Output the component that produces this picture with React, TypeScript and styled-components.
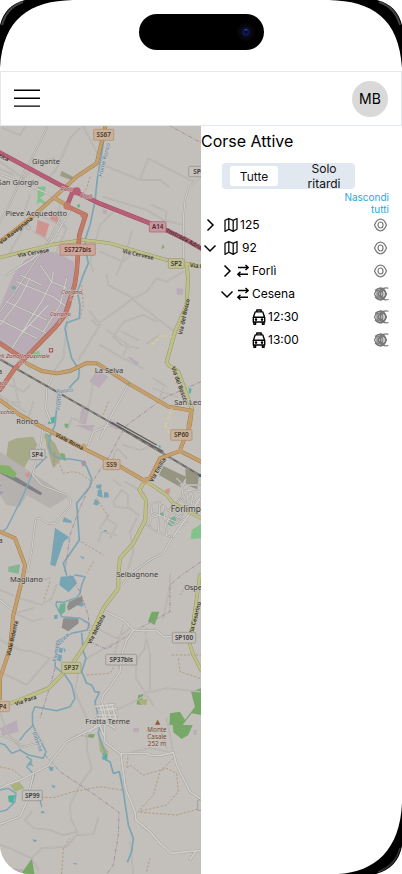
import React from "react";
import styled, { createGlobalStyle } from "styled-components";

const GlobalStyle = createGlobalStyle`
  body { margin: 0; background: #fff; overflow: hidden; }
  *, *::before, *::after { box-sizing: border-box; }
`;

const Screen = styled.div`
  position: relative;
  width: 402px;
  height: 874px;
  overflow: hidden;
  display: flex;
  flex-direction: column;
  background: #fff;
  color: #000;
  font-family: Inter, "Liberation Sans", sans-serif;
`;

const StatusBar = styled.div`
  height: 71px;
  flex: none;
  display: flex;
  justify-content: center;
  padding-top: 14px;
`;

const Island = styled.div`
  width: 125px;
  height: 36px;
  border-radius: 18px;
  background: #000;
  display: flex;
  align-items: center;
  justify-content: flex-end;
  padding-right: 8px;
`;

const Header = styled.header`
  height: 55px;
  flex: none;
  display: flex;
  align-items: center;
  justify-content: space-between;
  padding: 0 13px;
  border: 1px solid #e2e8f0;
`;

const Avatar = styled.div`
  width: 36px;
  height: 36px;
  border-radius: 50%;
  display: grid;
  place-items: center;
  background: #d9d9d9;
  font-size: 14px;
`;

const Main = styled.main`
  flex: 1;
  display: flex;
  min-height: 0;
`;

const MapPane = styled.section`
  width: 201px;
  height: 748px;
  flex: none;
  overflow: hidden;
  border-bottom-left-radius: 30px;
  background: #c3bfba;
  svg { display: block; }
`;

const Panel = styled.section`
  flex: 1;
  display: flex;
  flex-direction: column;
  padding-right: 13px;
`;

const Title = styled.h1`
  margin: 5px 0 0;
  font-size: 16px;
  line-height: 20px;
  font-weight: 400;
`;

const Toggle = styled.div`
  width: 133px;
  height: 26px;
  margin: 12px 0 0 21px;
  padding: 0 8px;
  border-radius: 4px;
  background: #e2e8f0;
  display: flex;
  align-items: center;
  justify-content: space-between;
`;

const Option = styled.button<{ $active?: boolean }>`
  border: 0;
  padding: 0;
  width: ${p => (p.$active ? 48 : 46)}px;
  height: ${p => (p.$active ? 20 : 30)}px;
  border-radius: 3px;
  background: ${p => (p.$active ? "#fff" : "transparent")};
  color: #111;
  font: 12px/15px Inter, sans-serif;
`;

const HideAll = styled.a`
  align-self: flex-end;
  width: 50px;
  margin-top: 2px;
  text-align: right;
  font-size: 10px;
  line-height: 12px;
  color: #27a9e1;
`;

const Tree = styled.ul`
  list-style: none;
  margin: -2px 0 0;
  padding: 0;
`;

const Row = styled.li<{ $indent: number }>`
  height: 23px;
  display: flex;
  align-items: center;
  padding-left: ${p => p.$indent}px;
  font-size: 12px;
  line-height: 15px;
  > svg { flex: none; }
`;

const Label = styled.span<{ $gap?: number }>`
  flex: 1;
  margin-left: ${p => p.$gap ?? 0}px;
`;

const Frame = styled.svg`
  position: absolute;
  inset: 0;
  pointer-events: none;
`;

const MapText = styled.text<{ $size?: number; $tone?: string; $bold?: boolean; $italic?: boolean }>`
  font-family: "Noto Sans", sans-serif;
  font-size: ${p => p.$size ?? 22}px;
  font-weight: ${p => (p.$bold ? 600 : 400)};
  font-style: ${p => (p.$italic ? "italic" : "normal")};
  fill: ${p => p.$tone ?? "#383838"};
  text-anchor: middle;
  paint-order: stroke;
  stroke: #cbc7c2;
  stroke-width: ${p => (p.$bold ? 0 : 3)}px;
`;

type Line = [d: string, width?: number];

const Lines = ({ items, color, casing, width, dash }: { items: Line[]; color: string; casing?: string; width: number; dash?: string }) => (
  <g fill="none" strokeLinejoin="round" strokeLinecap={dash ? "butt" : "round"}>
    {casing && items.map(([d, w = width]) => <path key={"c" + d} d={d} stroke={casing} strokeWidth={w + 2.5} />)}
    {items.map(([d, w = width]) => <path key={d} d={d} stroke={color} strokeWidth={w} strokeDasharray={dash} />)}
  </g>
);

const areas: [string, string][] = [
  ["#b9acb7", "M75 405 120 383 165 380 222 410V445L215 545 180 600 95 680 60 700 0 655V545L40 450Z"],
  ["#b9acb7", "M290 735 325 755 297 788 268 770ZM245 850 268 848 258 898 237 895ZM383 697 390 695 417 713 413 725ZM530 488 550 492 548 510 530 508ZM325 880 370 905 350 915 320 900ZM308 252 322 256 320 268 308 266ZM225 900H285L275 920ZM0 2225 70 2234 60 2247H0Z"],
  ["#b9acb7", "M0 1810 50 1785 56 1820 8 1832ZM15 2230 72 2233 52 2250 10 2250ZM400 1809H417V1822H400ZM580 1815H590V1830H580Z"],
  ["#84c28d", "M112 186 137 184 133 210 120 218 137 232 134 240 120 230 110 240 113 214ZM100 682 118 678 122 692 102 704ZM590 1205 603 1196V1240L572 1243 575 1215Z"],
  ["#7bad76", "M160 982 175 987 173 1005 158 1002ZM180 984 194 986 198 1009 182 1002ZM485 365l6-7 2 10-8 5ZM192 896h14v12h-10Z"],
  ["#6fb291", "M135 925 150 930 148 944 133 940ZM510 1180l13-6 7 10-15 20-12-6ZM478 1164l14-2v14h-11ZM180 1437 197 1434 196 1459 183 1470 176 1457ZM230 240l8-4 3 9-7 4ZM35 484h12v9H36Z"],
  ["#a7aa88", "M50 940 100 935 112 960 80 1015 62 1050 18 1000 25 950ZM135 925 165 955 185 1000 160 1030 140 965Z"],
  ["#9a9d7f", "M185 138 228 160 215 166 180 152Z"],
  ["#969581", "M490 1023 558 1055 542 1087 477 1050ZM556 1030 597 1050 592 1093 558 1080Z"],
  ["#b4b1ae", "M0 980 205 1115 150 1150 80 1110 60 1145 20 1140 0 1110Z"],
  ["#828087", "M0 1027 127 1104 121 1111 0 1045Z"],
  ["#83b167", "M0 1020 28 1022 50 1045 43 1060 0 1043Z"],
  ["#cf9490", "M113 285 148 297 135 338 107 323ZM154 265 181 280 169 293 150 281ZM75 1046l12-6 5 14-11 5ZM497 1093l14-3-3 16-13-3Z"],
  ["#c98795", "M243 1013 254 1004 260 1017 248 1025Z"],
  ["#77a5b3", "M165 1208 208 1237 191 1250 166 1324 151 1320ZM288 1080 305 1078 303 1092 290 1090ZM293 1095 305 1093 308 1118 292 1113ZM313 1100 325 1103 327 1117 311 1118ZM285 1122 298 1130 293 1142 280 1138ZM192 1176 215 1188 214 1195 188 1190ZM310 1216 321 1215 318 1225ZM238 1293 252 1296 250 1303ZM474 959 483 962 480 973ZM182 1355 220 1352 231 1375 206 1402 178 1380ZM177 1566 190 1572 186 1585 173 1580ZM190 1567 197 1574 194 1584ZM172 1587 186 1590 183 1610 171 1605ZM234 1432 252 1435 248 1446 235 1442ZM163 1470 174 1469 172 1482 162 1482ZM145 1925 160 1926 159 1938 150 1937ZM153 1980 168 1983 160 1990ZM97 2143 112 2146 103 2152ZM198 2125 208 2124 205 2130ZM219 2215 230 2214 228 2220ZM123 2059h10v6h-10Z"],
  ["#908e8c", "M207 1430 245 1413 250 1430 205 1457 201 1446ZM190 1480 235 1480 236 1495 205 1519 185 1508Z"],
  ["#77a868", "M455 1460 478 1460 464 1500 444 1489ZM518 1800 578 1800 565 1830 545 1842 520 1822ZM415 1710 430 1707 424 1740 410 1738ZM573 1700 603 1690V1770L575 1765 548 1800 508 1800 510 1765 540 1760 555 1785 585 1745ZM96 2200 103 2247 63 2247ZM265 1827 285 1828 280 1839 265 1837Z"],
  ["#a9b27c", "M415 1725 442 1722 440 1740 420 1738ZM293 1820 310 1860 325 1880 322 1905 300 1880ZM30 1980 58 1970 73 1990 45 2000Z"],
  ["#4eb39a", "M567 788l8 4-4 15-5-4ZM308 1885 322 1888 320 1907 308 1903ZM24 2012 45 2010 40 2035 26 2030ZM150 880l15-6-2 20-20 4Z"],
  ["#87b594", "M25 1325 60 1318 56 1346 25 1340Z"],
];

const tracks: Line[] = [
  ["M240 10 210 40 170 130 150 155M250 5 310 120 420 165 445 100 580 170M420 165H480L505 185M310 215 440 255 490 285 550 300M350 250 300 300 270 410 280 440M395 318 385 360 350 450M455 240 500 260 495 300M300 380 370 410 390 390M320 450 325 480 400 520 440 500 470 460 500 470 550 440"],
  ["M400 525 530 625M400 520 290 600 275 585M370 590 430 570 470 590M370 593 340 635 365 660 415 670M320 615 385 660 370 690M365 620 415 645M440 655 480 630M300 660 370 700 430 730M270 560 300 600 235 705M180 600 205 560 190 700 160 740M460 790 530 815M460 760 500 785M480 820 490 790M0 640 40 670 90 730M0 810 75 860M40 760 60 850M280 765 270 830 245 890 215 880 205 910"],
  ["M350 970 380 1000M370 960 420 975 450 965M350 970 335 1010M340 1130 365 1095 385 1110V1150L345 1145 340 1130M385 1145 415 1170M375 1070 435 1105M340 1065 360 1080M320 1180 350 1200 330 1240M350 1230 305 1220 295 1250M300 1210 325 1170M410 1180 390 1220 400 1280 385 1330"],
  ["M0 1395 60 1420 125 1440 155 1420 170 1380M70 1350 90 1370 150 1360M45 1465 100 1450M0 1545 60 1575 100 1580 150 1600 80 1680 0 1640M45 1465 100 1490 125 1480M260 1600 340 1555M250 1490 350 1540 390 1510M370 1500 345 1580 360 1640M510 1350V1380L490 1480M440 1510 435 1570 400 1620M435 1520 450 1590V1690L440 1710M390 1590 410 1610 408 1660 440 1710M440 1705 500 1690 600 1700M440 1710 460 1740M330 1765 400 1730 440 1710"],
  ["M260 1820 262 1880 275 1930 240 1980 210 2040 212 2080 232 2120 190 2130 150 2115 100 2110 75 2085 95 2060M232 2130 280 2128 295 2080M0 2160 30 2170 95 2200 125 2170 200 2165 230 2130M95 2200 115 2235M390 2150 400 2247M395 1880 450 1870 510 1880M500 1780 512 1840 520 1885M485 1820 500 1870M0 1760 20 1820 60 1870M235 1640 225 1700 260 1780"],
  ["M10 10 60 30 75 5M0 110 70 160 90 140M70 165 100 120 160 100M0 130 40 150M90 210 70 270 85 300M120 270 200 310 160 400M180 230 175 280 200 310M70 310 30 380M100 320 160 355M0 700 50 730 25 760M30 780 70 800 90 780M100 830 85 880M20 830 60 830"],
];

const minor: Line[] = [
  ["M140 10 95 100 75 135 30 235 0 290", 3], ["M0 148 60 170 130 200 165 215", 4], ["M210 255 160 345 100 400 20 450", 4], ["M600 155 565 190 555 225 550 280V410", 3.5], ["M190 260 150 340 45 500 0 560", 3],
  ["M50 470 160 515 200 545M90 460 60 520 0 600M120 420 155 470 130 520 30 680M200 460 180 540 130 620M60 630 145 540M0 585 90 630 110 640M20 530 140 585M60 450 125 480M160 440 155 470 200 490M90 600 150 630", 3.5],
  ["M385 780 345 850 300 940", 4], ["M165 740 140 790 137 850 152 890", 4], ["M130 900 122 960 110 1000 98 1050 125 1080 200 1110 212 1125 210 1145 165 1195 145 1197 120 1180 108 1182 103 1210 95 1280 83 1340", 3.5], ["M330 900 280 920 265 960", 4],
  ["M515 1240 490 1285 450 1305 395 1345 370 1375", 4], ["M600 1120 570 1165 540 1205 520 1235", 5], ["M318 1460 370 1485 400 1515 380 1545 368 1580 360 1640 330 1685 310 1710 305 1730 315 1765 320 1795", 4.5], ["M400 1515 430 1517 470 1517 490 1535 570 1535", 4.5],
  ["M0 1426 45 1460", 4], ["M300 1802 270 1815 200 1850 160 1900 145 1922 60 1965 20 1980 0 1990", 4.5], ["M0 2098 60 2075 80 2030 90 1990 100 1950", 4.5], ["M315 1800 313 1850 360 1886 440 1885 450 1890 480 1892 520 1883 530 1920 550 1960 570 2000 603 2022", 5], ["M363 1888 375 1980 380 2000 405 2060 408 2085 450 2120 480 2155 515 2185 560 2180 603 2177M590 2175 570 2205", 5],
  ["M0 1830 50 1850 70 1865 130 1850", 3],
  ["M445 1140 470 1130 510 1160 540 1120M450 1180 480 1170 520 1200 545 1180M440 1200 470 1220 510 1235M510 1150 535 1180 570 1140M530 1060 550 1080 545 1120 560 1140M455 1150 450 1200M480 1130 475 1220M555 1110 603 1140M565 1090 560 1150M580 1100 570 1160M550 1095 603 1100M490 1140 500 1230M450 1160 550 1200M520 1130 500 1200M540 1080 600 1080M530 1170 560 1190", 3],
  ["M285 1745 342 1738M295 1755 350 1750M293 1770 352 1770M300 1740 315 1790M320 1740 335 1790M335 1738 350 1790M290 1780H350M270 1820 290 1800 320 1795 345 1810M300 1800 310 1830", 5],
];

const rivers: Line[] = [
  ["M318 0 305 85 292 160 285 230 270 300 255 345 262 400 265 415 250 450 232 500 240 540 238 580 200 593 195 610 203 650 215 700 238 735 235 760 215 780 200 800 175 800 165 900 150 935 147 965 155 985 175 1000 210 1002 245 1008 260 1025 275 1062 270 1085 230 1135 238 1245 190 1315 200 1350", 5],
  ["M225 1350 255 1355 245 1380 240 1405 230 1418 190 1432 170 1430 168 1440 185 1475 240 1480 268 1495 262 1515 215 1525 170 1550 165 1625 195 1650 215 1680 225 1720 210 1745 170 1757 105 1745 97 1765 98 1800 138 1880 130 1900 85 1890 60 1875 35 1885 15 1860 0 1855", 4.5],
  ["M245 1525 250 1580 258 1600 245 1640 260 1675 275 1680 285 1700 298 1702 285 1730 300 1800 295 1825 305 1855 315 1885 308 1900 330 1910 340 1945 358 1940 370 2000 385 2100 400 2140 395 2180 383 2210", 5],
  ["M140 995 105 1030 95 1050 70 1110 20 1210 0 1225", 4], ["M100 1800 75 1825 60 1845M80 1895 95 1905 80 1925 103 1950 90 1995M0 1995 25 1990 48 2005 45 2030 20 2055 0 2060M120 2025 125 2045", 4],
  ["M88 1920 95 1912M88 1914 98 1922", 4],
];

const tan: Line[] = [
  ["M317 0 303 60 290 115 230 155 165 215 85 285 0 350", 9], ["M165 220 200 240", 9], ["M80 715 125 738 170 745 210 738 260 714 292 715 385 775 505 845 575 857 570 900 540 975", 9],
  ["M0 825 60 870 115 900 250 970 370 1030 430 1065 450 1060 480 1000 540 978 603 1010", 9], ["M565 905 573 860", 8], ["M0 1220 45 1240 75 1320 70 1350 40 1470 30 1570 0 1660V1720", 9],
];
const yellow: Line[] = [
  ["M0 398 30 390 160 358 250 345 330 355 500 405 550 415 575 418", 8], ["M560 420 564 460 560 540 525 620 500 710 505 720 535 740 577 855", 9], ["M430 1075 418 1095 438 1125 436 1185 400 1255 360 1300 355 1350V1390L310 1450 265 1545 215 1620 145 1690 60 1725 0 1745", 9], ["M600 1350 570 1560 580 1590 603 1635", 8], ["M440 1070 500 1110 520 1135 603 1180", 8], ["M550 415 603 425", 7],
];
const dashed: Line[] = [["M245 480 250 540 240 580M270 155 260 190 245 210M175 1010 190 1045 220 1040 240 1045 275 1070M165 980 160 1025M290 1120 325 1175M325 830 310 870M235 1245 310 1290M280 1310 260 1345M0 1925 40 1935 70 1960M100 2015 160 2018 220 2000 300 1985 365 1995M385 1885 380 1930 390 1920 430 1950 500 1930 530 1945 535 2000 500 2040 415 2060 460 2010 480 1940 520 1900M420 2062 530 2070 603 2050M515 1590H603M535 1600 540 1640 600 1660M150 1370 130 1430M260 1650 330 1645 350 1610M540 1410 560 1380M185 2247 190 2170 210 2140M440 2240 450 2200M200 1850 230 1830 270 1835"]];

const shields: [x: number, y: number, w: number, h: number, t: string, bg: string, edge: string, ink: string][] = [
  [281, 13, 60, 33, "SS67", "#c9b29b", "#b08a62", "#493522"], [448, 290, 50, 31, "A14", "#c29a9f", "#b0566b", "#5c2130"], [180, 357, 106, 34, "SS727bis", "#cba79b", "#bd7364", "#51261e"],
  [505, 401, 48, 29, "SP2", "#c0be98", "#9c9c5f", "#3d3d1e"], [512, 914, 64, 32, "SP60", "#c9b29b", "#b08a62", "#493522"], [310, 1003, 50, 31, "SS9", "#c9b29b", "#b08a62", "#493522"],
  [89, 973, 46, 31, "SP4", "#c4c1bd", "#8e8c89", "#3a3a3a"], [566, 124, 60, 31, "SP6", "#c4c1bd", "#8e8c89", "#3a3a3a"], [185, 1612, 58, 33, "SP37", "#c0be98", "#9c9c5f", "#3d3d1e"], [317, 1588, 93, 32, "SP37bis", "#c4c1bd", "#8e8c89", "#3a3a3a"],
  [517, 1522, 70, 32, "SP100", "#c4c1bd", "#8e8c89", "#3a3a3a"], [67, 1996, 60, 31, "SP99", "#c4c1bd", "#8e8c89", "#3a3a3a"], [-22, 1729, 50, 31, "SP4", "#c9b29b", "#b08a62", "#493522"], [593, 2025, 30, 31, "", "#c4c1bd", "#8e8c89", "#3a3a3a"],
];

const places: [x: number, y: number, t: string][] = [[138, 117, "Gigante"], [54, 179, "San Giorgio"], [109, 273, "Pieve Acquedotto"], [327, 744, "La Selva"], [571, 839, "San Leon…"], [82, 897, "Ronco"], [412, 1356, "Selbagnone"], [79, 1371, "Magliano"], [323, 1798, "Fratta Terme"]];

const roadNames: [x: number, y: number, a: number, t: string, c?: string][] = [
  [48, 317, -38, "Via Ravegnana"], [100, 384, -10, "Via Cervese"], [414, 389, 13, "Via Cervese"], [553, 575, -78, "Via del Bosco"], [537, 777, 70, "Via del Bosco"], [208, 950, 27, "Viale Roma"], [474, 1035, -60, "Via Emilia"],
  [38, 1540, -77, "Viale Bidente"], [290, 1513, -63, "Via Meldola"], [77, 1727, -19, "Via Para"], [586, 1480, -75, "Via Cesarino"], [557, 345, 28, "Autostrada Adriatica"], [7, 96, 25, "atica"], [590, 423, 5, "Via R"],
  [313, 105, -76, "Fiume Ronco", "#527e9e"], [177, 830, -85, "Fiume", "#527e9e"], [194, 798, -8, "Ronco", "#527e9e"], [168, 1585, -80, "Fiume", "#527e9e"], [188, 1545, -45, "Ronco", "#527e9e"], [112, 1850, 70, "Bidente", "#527e9e"],
];

const redNames: [x: number, y: number, t: string][] = [[200, 198, "Forlì"], [259, 220, "Forlì"], [215, 506, "Coriano"], [215, 524, "7"], [181, 574, "Coriano"], [181, 592, "7"], [73, 700, "rlì Zona Industriale"], [63, 721, "8"], [8, 780, "nco"], [2, 800, "9"], [18, 867, "ecchio"]];

const TerritoryMap = () => (
  <svg width="201" height="748" viewBox="0 3 603 2244">
    <rect width="603" height="2247" fill="#c3bfba" />
    {areas.map(([fill, d]) => <path key={d} d={d} fill={fill} />)}
    <Lines items={tracks} color="#c7c4c0" casing="#adaaa8" width={2} />
    <Lines items={dashed} color="#a78b68" width={2} dash="7 5" />
    <Lines items={rivers} color="#7ba5b5" width={5} />
    <Lines items={[["M505 0 603 53M603 770 490 820 375 905 330 990 270 1080 235 1160 210 1230 195 1340M210 1350 240 1400 265 1470 270 1550 320 1573 400 1520 510 1460V1380L545 1350M170 1560 165 1630 145 1700 120 1780M135 1890 180 1940 285 2010 357 2062 355 2130 340 2220 320 2247M603 1310 545 1350"]]} color="#a38fa4" width={3} dash="12 4 3 4" />
    <Lines items={minor} color="#d1cecb" casing="#a09e9b" width={4} />
    <path d="M0 703 345 900 603 1053" fill="none" stroke="#686866" strokeWidth="6" />
    <path d="M0 703 345 900 603 1053" fill="none" stroke="#a6a39f" strokeWidth="2.5" strokeDasharray="14 14" />
    <path d="M335 893 490 980M350 893 470 960" stroke="#5c5c5b" strokeWidth="4" fill="none" />
    <Lines items={yellow} color="#bec087" casing="#91936a" width={8} />
    <Lines items={tan} color="#c5a06f" casing="#a27843" width={9} />
    <Lines items={[["M200 243 257 270 238 330 230 440 224 480 195 570 165 608 85 690 45 730 0 795M0 655 60 695"]]} color="#c17b69" casing="#aa5b4c" width={11} />
    <Lines items={[["M0 83 180 180 240 207 300 236 445 293 500 316 560 345 603 370M200 245 220 195"]]} color="#b85f78" casing="#a34860" width={11} />
    <circle cx="230" cy="199" r="12" fill="#b85f78" /><circle cx="201" cy="243" r="11" fill="#c17b69" /><circle cx="251" cy="270" r="10" fill="#c17b69" />
    <circle cx="251" cy="964" r="8" fill="#c5a06f" /><circle cx="435" cy="1068" r="9" fill="#c5a06f" /><circle cx="540" cy="978" r="8" fill="#c5a06f" />
    <circle cx="290" cy="718" r="3" fill="#8ea065" /><circle cx="387" cy="775" r="4" fill="#8ea065" /><circle cx="85" cy="308" r="6" fill="#c8c5c2" stroke="#999" strokeWidth="2" />
    <path d="M455 660 480 632 515 635M497 900 515 850M495 900 510 930" stroke="#d1cc99" strokeWidth="6" strokeDasharray="10 7" fill="none" />
    <rect x="148" y="671" width="10" height="10" fill="none" stroke="#a93d46" strokeWidth="2.5" />
    <path d="M473 1784 481 1799H465Z" fill="#9c5635" />
    <rect x="597" y="1047" width="10" height="9" fill="#4c5c93" />
    {roadNames.map(([x, y, a, t, c]) => <MapText key={`${x}-${y}`} transform={`translate(${x} ${y}) rotate(${a})`} y={5} $size={17} $tone={c ?? "#37362b"} $bold={!c}>{t}</MapText>)}
    {redNames.map(([x, y, t]) => <MapText key={`${x}-${y}`} x={x} y={y} $size={18} $tone="#9b3440" $italic>{t}</MapText>)}
    {places.map(([x, y, t]) => <MapText key={t} x={x} y={y} $size={22.5}>{t === "San Leon…" ? "San Leonardo" .slice(0, 8) : t}</MapText>)}
    <MapText x={565} y={1160} $size={25}>Forlimpo</MapText>
    <MapText x={586} y={1395} $size={22}>Osped</MapText>
    <MapText x={2} y={1253} $size={22}>a</MapText>
    <MapText x={0} y={746} $size={22}>a</MapText>
    <MapText x={2} y={1085} $size={18} $tone="#6f5a96" $italic>ì</MapText>
    <MapText x={1} y={1110} $size={18} $tone="#6f5a96" $italic>ifi</MapText>
    {["Monte", "Casale", "252 m"].map((t, i) => <MapText key={t} x={471} y={1820 + i * 22} $size={19} $tone="#724629">{t}</MapText>)}
    {shields.map(([x, y, w, h, t, bg, edge, ink]) => (
      <g key={`${x}-${y}`}>
        <rect x={x} y={y} width={w} height={h} rx="3" fill={bg} stroke={edge} strokeWidth="2" />
        <MapText x={x + w / 2} y={y + h / 2 + 7} $size={19} $tone={ink} $bold>{t}</MapText>
      </g>
    ))}
  </svg>
);

const Chevron = ({ open }: { open?: boolean }) => (
  <svg width="18" height="18" viewBox="0 0 18 18" fill="none" stroke="#000" strokeWidth="1.5">
    <path d={open ? "M3.5 6.5 9 12l5.5-5.5" : "M6.5 3.5 12 9l-5.5 5.5"} />
  </svg>
);

const MapIcon = () => (
  <svg width="16" height="18" viewBox="0 0 16 18" fill="none" stroke="#111" strokeWidth="1.3" strokeLinejoin="round">
    <path d="M2 4.4 5.8 2.5 10.2 4.4 14 2.5V13.2L10.2 15.4 5.8 13.2 2 15.4ZM5.8 2.5V13.2M10.2 4.4V15.4" />
  </svg>
);

const Arrows = () => (
  <svg width="14" height="16" viewBox="0 0 14 16" fill="none" stroke="#000" strokeWidth="1.4">
    <path d="M2 4.5H12M9.5 2 12.2 4.5 9.5 7M12 11.2H2M4.5 8.7 1.8 11.2 4.5 13.7" />
  </svg>
);

const Car = () => (
  <svg width="16" height="18" viewBox="0 0 16 18" fill="none" stroke="#000" strokeWidth="1.4" strokeLinejoin="round">
    <path d="M2.3 9.2H13.7V14H2.3ZM2.5 9 4.2 3.9H11.8L13.5 9M5.8 3.7V2H10.2V3.7M2.9 14V16.2H4.6V14M11.4 14V16.2H13.1V14" />
    <circle cx="5" cy="11.6" r=".6" fill="#000" /><circle cx="11" cy="11.6" r=".6" fill="#000" />
  </svg>
);

const eyeOutline = "M2.5 8C4 4.3 5.8 2.2 8.5 2.2S13 4.3 14.5 8C13 11.7 11.2 13.8 8.5 13.8S4 11.7 2.5 8Z";

const Eye = ({ stacked }: { stacked?: boolean }) => (
  <svg width="17" height="16" viewBox="0 0 17 16" fill="none" stroke="#777" strokeWidth="1.2">
    <path d={eyeOutline} />
    <ellipse cx="8.5" cy="8" rx="2.5" ry="3" />
    {stacked && <>
      <path d="M16.5 2.2C12.5 1 9 2 6.4 7.8 8.7 13.2 12.3 14.8 16.5 13.5" />
      <path d="M3 4.5Q7 .5 13 3.2M3 11Q7 15.5 13 12.7M5 5.2Q9 1.8 13.2 5.3V10.5Q9 14 5 10.5Z" />
      <ellipse cx="11" cy="8" rx="2.8" ry="3.4" />
      <path d="M9 5.2V10.6" />
    </>}
  </svg>
);

export default function App() {
  return (
    <>
      <GlobalStyle />
      <Screen>
        <StatusBar>
          <Island>
            <svg width="20" height="20" viewBox="0 0 20 20">
              <circle cx="10" cy="10" r="9" fill="#08050b" />
              <circle cx="10" cy="10" r="5.5" fill="#0b0c25" />
              <circle cx="10" cy="10" r="3.5" fill="#11184d" />
              <circle cx="10" cy="10" r="1.4" fill="#050820" />
              <ellipse cx="10" cy="7.7" rx="1.5" ry=".7" fill="#35468f" />
            </svg>
          </Island>
        </StatusBar>
        <Header>
          <svg width="26" height="20" viewBox="0 0 26 20" stroke="#000" strokeWidth="1.4">
            <path d="M0 1.3H26M0 9.2H26M0 17.1H26" />
          </svg>
          <Avatar>MB</Avatar>
        </Header>
        <Main>
          <MapPane><TerritoryMap /></MapPane>
          <Panel>
            <Title>Corse Attive</Title>
            <Toggle>
              <Option $active>Tutte</Option>
              <Option>Solo ritardi</Option>
            </Toggle>
            <HideAll>Nascondi tutti</HideAll>
            <Tree>
              <Row $indent={0}><Chevron /><svg width="4" height="1" /><MapIcon /><Label $gap={1}>125</Label><Eye /></Row>
              <Row $indent={0}><Chevron open /><svg width="4" height="1" /><MapIcon /><Label $gap={3}>92</Label><Eye /></Row>
              <Row $indent={17}><Chevron /><Arrows /><Label $gap={2}>Forlì</Label><Eye /></Row>
              <Row $indent={17}><Chevron open /><Arrows /><Label $gap={2}>Cesena</Label><Eye stacked /></Row>
              <Row $indent={50}><Car /><Label $gap={1}>12:30</Label><Eye stacked /></Row>
              <Row $indent={50}><Car /><Label $gap={1}>13:00</Label><Eye stacked /></Row>
            </Tree>
          </Panel>
        </Main>
        <Frame width="402" height="874" viewBox="0 0 402 874">
          <path d="M0 68V25Q5 5 25 0H73C30 1 3 18 0 68ZM402 68V25Q397 5 377 0H329C372 1 399 18 402 68Z" fill="#000" />
          <path d="M2 25Q7 7 23 2M400 25Q395 7 379 2" fill="none" stroke="#444" strokeWidth="2" />
          <path d="M402 803V846Q398 868 376 874H338C375 872 400 850 402 803Z" fill="#000" />
          <path d="M400 848Q396 865 378 872" fill="none" stroke="#333" strokeWidth="1.5" />
        </Frame>
      </Screen>
    </>
  );
}
